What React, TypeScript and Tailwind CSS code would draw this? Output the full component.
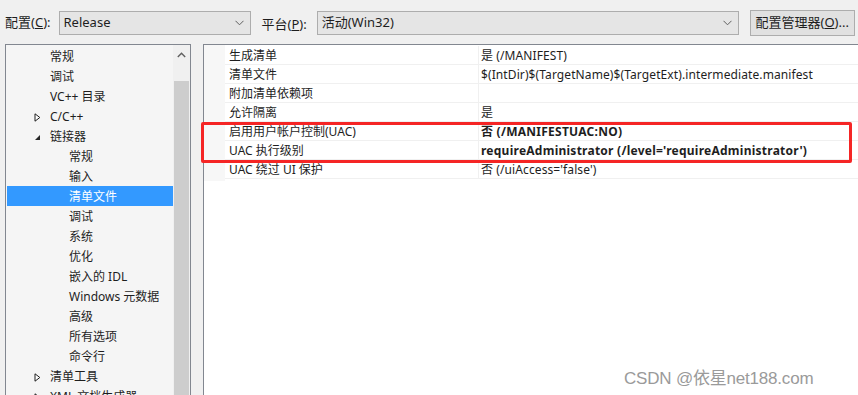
import { ReactNode } from "react";

const font = { fontFamily: '"Noto Sans", "Noto Sans CJK SC", sans-serif' };

function Chevron() {
  return (
    <svg width="9" height="6" viewBox="0 0 9 6" className="text-[#606060]">
      <path d="M0.5 0.8 L4.5 4.8 L8.5 0.8" fill="none" stroke="currentColor" strokeWidth="1" />
    </svg>
  );
}

function Combo({ value, width }: { value: string; width: string }) {
  return (
    <div className={`${width} h-[24px] flex items-center justify-between bg-[#e5e5e5] border border-[#adadad] pl-[4px] pr-[6px]`}>
      <span className="text-[13px] text-[#1e1e1e]">{value}</span>
      <Chevron />
    </div>
  );
}

function Collapsed() {
  return (
    <svg width="7" height="9" viewBox="0 0 7 9">
      <path d="M1 0.8 L5.8 4.5 L1 8.2 Z" fill="white" stroke="#1e1e1e" strokeWidth="1" />
    </svg>
  );
}

function Expanded() {
  return (
    <svg width="7" height="7" viewBox="0 0 7 7">
      <path d="M6 1 L6 6 L1 6 Z" fill="#262626" />
    </svg>
  );
}

type Node = { label: string; level: 1 | 2; icon?: "c" | "e"; selected?: boolean };

const tree: Node[] = [
  { label: "常规", level: 1 },
  { label: "调试", level: 1 },
  { label: "VC++ 目录", level: 1 },
  { label: "C/C++", level: 1, icon: "c" },
  { label: "链接器", level: 1, icon: "e" },
  { label: "常规", level: 2 },
  { label: "输入", level: 2 },
  { label: "清单文件", level: 2, selected: true },
  { label: "调试", level: 2 },
  { label: "系统", level: 2 },
  { label: "优化", level: 2 },
  { label: "嵌入的 IDL", level: 2 },
  { label: "Windows 元数据", level: 2 },
  { label: "高级", level: 2 },
  { label: "所有选项", level: 2 },
  { label: "命令行", level: 2 },
  { label: "清单工具", level: 1, icon: "c" },
  { label: "XML 文档生成器", level: 1, icon: "c" },
];

const props: { name: string; value: string; bold?: boolean }[] = [
  { name: "生成清单", value: "是 (/MANIFEST)" },
  { name: "清单文件", value: "$(IntDir)$(TargetName)$(TargetExt).intermediate.manifest" },
  { name: "附加清单依赖项", value: "" },
  { name: "允许隔离", value: "是" },
  { name: "启用用户帐户控制(UAC)", value: "否 (/MANIFESTUAC:NO)", bold: true },
  { name: "UAC 执行级别", value: "requireAdministrator (/level='requireAdministrator')", bold: true },
  { name: "UAC 绕过 UI 保护", value: "否 (/uiAccess='false')" },
];

function Label({ children }: { children: ReactNode }) {
  return <span className="text-[13px] text-[#1e1e1e] whitespace-nowrap">{children}</span>;
}

export default function App() {
  return (
    <div className="w-[858px] h-[395px] overflow-hidden bg-[#f0f0f0] relative" style={font}>
      {/* toolbar */}
      <div className="h-[44px] flex items-center pl-[5px] pt-[1px]">
        <Label>配置(<u>C</u>):</Label>
        <div className="ml-[8px]">
          <Combo value="Release" width="w-[192px]" />
        </div>
        <div className="ml-[11px]">
          <Label>平台(<u>P</u>):</Label>
        </div>
        <div className="ml-[10px]">
          <Combo value="活动(Win32)" width="w-[422px]" />
        </div>
        <div className="ml-[11px] w-[105px] h-[26px] flex items-center justify-center bg-[#e1e1e1] border border-[#adadad]">
          <Label>配置管理器(<u>O</u>)...</Label>
        </div>
      </div>

      <div className="flex items-start">
        {/* tree */}
        <div className="ml-[5px] w-[186px] h-[360px] border border-[#828790] border-b-0 bg-[#f5f5f5] flex">
          <div className="flex-1 pl-[1px] pt-[1px]">
            {tree.map((n, i) => (
              <div
                key={i}
                className={`h-[20px] flex items-center pt-[2px] text-[12px] whitespace-nowrap ${n.selected ? "bg-[#3399ff] text-white" : "text-[#1e1e1e]"}`}
              >
                <div className="w-[42px] flex justify-end pr-[8px]">
                  {n.icon === "c" && <Collapsed />}
                  {n.icon === "e" && <Expanded />}
                </div>
                <span className={n.level === 2 ? "pl-[20px]" : "pl-[1px]"}>{n.label}</span>
              </div>
            ))}
          </div>
          <div className="w-[17px] bg-[#f0f0f0] flex flex-col">
            <div className="h-[19px] flex items-center justify-center pt-[1px]">
              <svg width="9" height="6" viewBox="0 0 9 6">
                <path d="M0.8 5 L4.5 1.3 L8.2 5" fill="none" stroke="#606060" strokeWidth="1.4" />
              </svg>
            </div>
            <div className="mt-[17px] mx-[1px] flex-1 bg-[#cdcdcd]" />
          </div>
        </div>

        {/* property grid */}
        <div className="ml-[12px] flex-1 h-[360px] border-l border-t border-[#828790] bg-white flex">
          <div className="w-[21px] bg-[#f7f7f7] h-[136px]" />
          <div className="flex-1 pt-[1px]">
            {props.map((p, i) => (
              <div key={i} className="h-[19px] flex border-b border-[#f0f0f0] text-[12px] text-[#1e1e1e] whitespace-nowrap">
                <div className="w-[254px] pl-[4px] pt-[2px] flex items-center border-r border-[#f0f0f0]">{p.name}</div>
                <div className={`pl-[2px] pt-[2px] flex items-center ${p.bold ? "font-bold tracking-[0.25px]" : "tracking-[0.1px]"}`}>
                  {p.value}
                </div>
              </div>
            ))}
          </div>
        </div>
      </div>

      {/* highlight */}
      <div className="absolute left-[201px] top-[122px] w-[651px] h-[41px] border-[3px] border-[#f52525] rounded-[2px]" />

      <div
        className="absolute left-[624px] top-[366px] text-[17px] text-[#9a9a9a] tracking-[-0.2px]"
        style={{ fontFamily: '"Liberation Sans", "Noto Sans CJK SC", sans-serif' }}
      >
        CSDN @依星net188.com
      </div>
    </div>
  );
}
